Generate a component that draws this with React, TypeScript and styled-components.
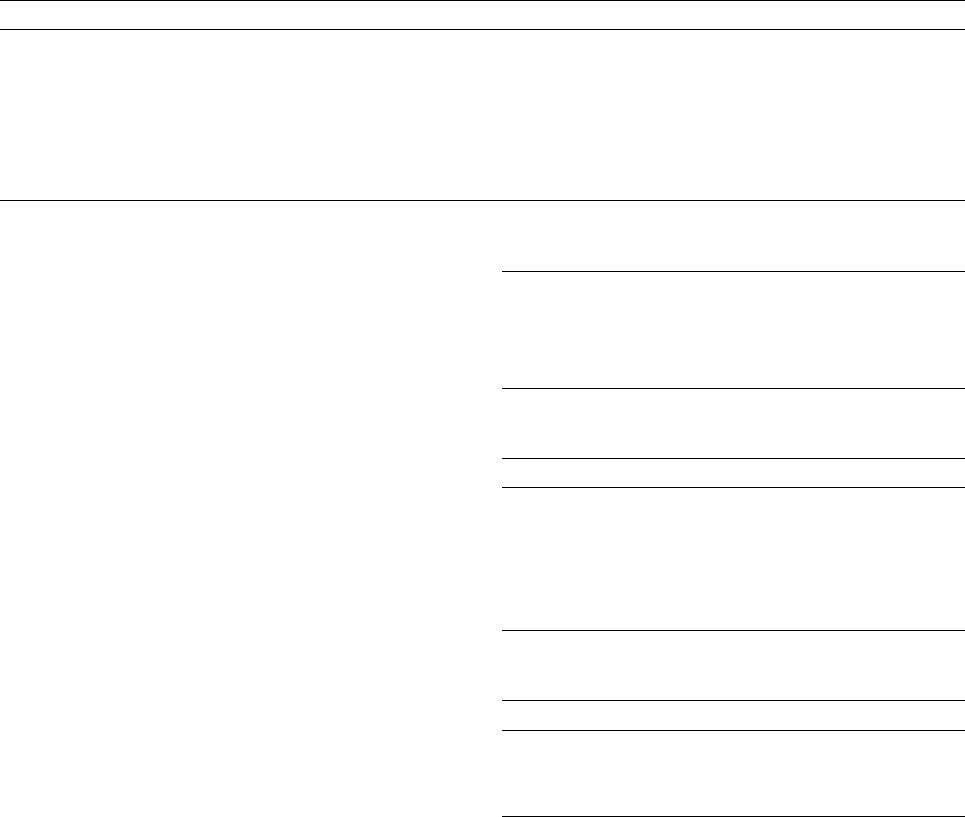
import styled, { createGlobalStyle } from "styled-components";

const GlobalStyle = createGlobalStyle`
  html, body {
    margin: 0;
    padding: 0;
    background: #ffffff;
    font-family: "Liberation Sans", Arial, sans-serif;
  }
`;

const Page = styled.div`
  width: 965px;
  min-height: 817px;
  display: flex;
  flex-direction: column;
`;

const TopBar = styled.header`
  height: 28px;
  border-top: 1px solid #000;
  border-bottom: 1px solid #000;
`;

const Hero = styled.section`
  height: 170px;
  border-bottom: 1px solid #000;
`;

const Main = styled.main`
  display: grid;
  grid-template-columns: 502px 1fr;
`;

const LeftColumn = styled.div``;

const RightColumn = styled.div`
  display: flex;
  flex-direction: column;
`;

const Row = styled.div<{ $h: number }>`
  height: ${props => props.$h}px;
  border-bottom: 1px solid #000;
`;

const rows = [70, 116, 69, 28, 142, 69, 29, 85];

function App() {
  return (
    <>
      <GlobalStyle />
      <Page>
        <TopBar />
        <Hero />
        <Main>
          <LeftColumn />
          <RightColumn>
            {rows.map((h, i) => (
              <Row key={i} $h={h} />
            ))}
          </RightColumn>
        </Main>
      </Page>
    </>
  );
}

export default App;
